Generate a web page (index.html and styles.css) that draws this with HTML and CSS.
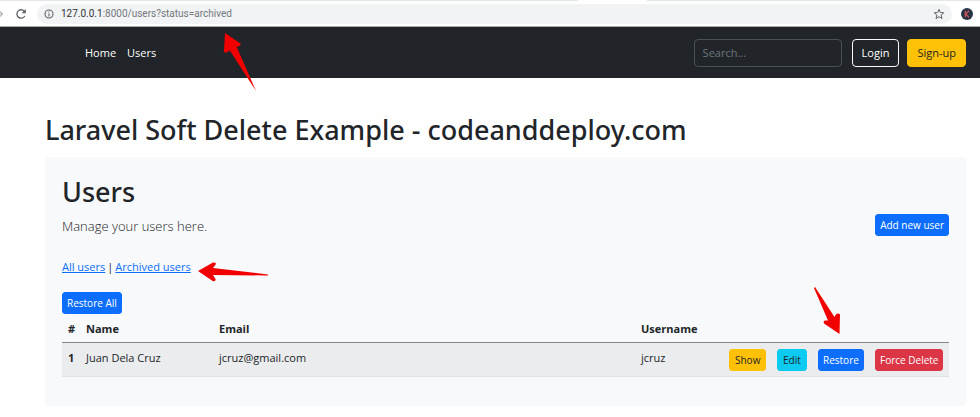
FILE: index.html
```
<!DOCTYPE html>
<html lang="en">
<head>
<meta charset="UTF-8">
<meta name="viewport" content="width=device-width, initial-scale=1">
<title>Laravel Soft Delete Example - codeanddeploy.com</title>
<link rel="stylesheet" href="styles.css">
</head>
<body>
	<div class="tabstrip"><span class="tab"></span></div>
	<div class="toolbar">
		<svg class="forward" viewBox="0 0 4 10"><path d="M-2 5h4M0 2.500l2.500 2.500-2.500 2.500" fill="none" stroke="#b5b8bb" stroke-width="1.2"/></svg>
		<button class="icon-btn" type="button" aria-label="Reload">
			<svg width="12" height="12" viewBox="0 0 12 12"><path d="M9.8 8A4.2 4.2 0 1 1 9.3 3.2L10 4" fill="none" stroke="#5f6368" stroke-width="1.3"/><path d="M10.8 1v4.2H6.6z" fill="#5f6368"/></svg>
		</button>
		<div class="address">
			<svg width="10" height="10" viewBox="0 0 10 10"><circle cx="5" cy="5" r="4" fill="none" stroke="#5f6368" stroke-width="1.1"/><path d="M5 4.4v3M5 2.5v1.1" stroke="#5f6368" stroke-width="1.1"/></svg>
			<span class="url"><span class="host">127.0.0.1</span>:8000/users?status=archived</span>
			<button class="icon-btn" type="button" aria-label="Bookmark">
				<svg width="12" height="12" viewBox="0 0 12 12"><path d="M6 1.3l1.3 3.2 3.5.3-2.7 2.3.9 3.4-3-1.8-3 1.8.9-3.4L1.200 4.800l3.5-.3z" fill="none" stroke="#5f6368" stroke-width="1"/></svg>
			</button>
		</div>
		<svg class="profile" width="12" height="12" viewBox="0 0 12 12"><circle cx="6" cy="6" r="6" fill="#263445"/><path d="M4.300 2.800v6.400M8 2.800L4.700 6 8 9.200" fill="none" stroke="#d9535b" stroke-width="1.2"/></svg>
	</div>

	<header class="navbar">
		<nav>
			<a href="#">Home</a>
			<a href="#">Users</a>
		</nav>
		<form class="search">
			<input type="search" placeholder="Search..." aria-label="Search">
		</form>
		<button class="nav-btn login" type="button">Login</button>
		<button class="nav-btn signup" type="button">Sign-up</button>
	</header>

	<main class="container">
		<h1>Laravel Soft Delete Example - codeanddeploy.com</h1>
		<div class="panel">
			<h1>Users</h1>
			<div class="lead">
				<span>Manage your users here.</span>
				<button class="btn primary" type="button">Add new user</button>
			</div>
			<div class="filters"><a href="#">All users</a><span>|</span><a href="#">Archived users</a></div>
			<button class="btn primary" type="button">Restore All</button>
			<table>
				<thead>
					<tr>
						<th class="col-id" scope="col">#</th>
						<th class="col-name" scope="col">Name</th>
						<th scope="col">Email</th>
						<th class="col-username" scope="col">Username</th>
						<th class="col-show"></th>
						<th class="col-edit"></th>
						<th class="col-restore"></th>
						<th class="col-delete"></th>
					</tr>
				</thead>
				<tbody>
					<tr>
						<th scope="row">1</th>
						<td>Juan Dela Cruz</td>
						<td>jcruz@gmail.com</td>
						<td>jcruz</td>
						<td><button class="btn warning" type="button">Show</button></td>
						<td><button class="btn info" type="button">Edit</button></td>
						<td><button class="btn primary" type="button">Restore</button></td>
						<td><button class="btn danger" type="button">Force Delete</button></td>
					</tr>
				</tbody>
			</table>
		</div>
	</main>

	<!-- red pointers over the page -->
	<svg class="arrow arrow-url" width="34" height="60" viewBox="0 0 34 60"><path d="M2 2L17.500 12.500Q18 15 15 15.500L13.500 15.500L33 60L6.500 19Q5 22 2 21.500Q0 21 1 19z"/></svg>
	<svg class="arrow arrow-filter" width="70" height="20" viewBox="0 0 70 20"><path d="M0 9L15 0.500Q18 0 18 2L15 6L70 12.500V13.500L15 13L17.500 17Q18 19.500 15 19.300z"/></svg>
	<svg class="arrow arrow-restore" width="28" height="48" viewBox="0 0 28 48"><path d="M1 0L20.500 30L22 27.500Q24 25.500 26 27.500L25.500 47L10 36.500Q9 34 11 33.500L14 33.500L0 1z"/></svg>
</body>
</html>
```
FILE: styles.css
```
* { box-sizing: border-box; }
body { margin: 0; position: relative; background: #fff; color: #212529; font-family: "Open Sans", "Noto Sans", sans-serif; font-size: 11px; line-height: 17px; }
button, input { font-family: inherit; font-size: inherit; line-height: inherit; }
button { cursor: pointer; }
a { color: #0d6efd; }
svg { display: block; flex: none; }

.tabstrip { display: flex; height: 1px; background: #e4e6ea; }
.tab { width: 7%; margin-left: 59%; background: #fff; }
.toolbar { display: flex; align-items: center; height: 26px; padding-right: 7px; border-bottom: 1px solid #a8a9ab; }
.forward { width: 4px; height: 10px; margin-right: 11px; }
.icon-btn { padding: 0; border: 0; background: none; }
.address { display: flex; flex: 1; align-items: center; gap: 7px; height: 20px; margin: 0 9px 0 10px; padding: 0 7px; border-radius: 10px; background: #f1f3f4; color: #74787c; font-family: Roboto, sans-serif; font-size: 10px; }
.url { flex: 1; }
.host { color: #303337; }

.navbar { display: flex; align-items: center; height: 51px; padding: 0 14px 0 85px; background: #212529; }
.navbar nav { display: flex; flex: 1; gap: 11px; }
.navbar a { color: #fff; text-decoration: none; }
.search input { display: block; width: 148px; height: 28px; padding: 0 8px; border: 1px solid #495057; border-radius: 4px; outline: 0; background: #212529; color: #fff; }
.search input::placeholder { color: #6c757d; }
.nav-btn { height: 28px; padding: 0 9px; border: 1px solid; border-radius: 4px; }
.login { margin: 0 8px 0 10px; border-color: #f8f9fa; background: #212529; color: #fff; }
.signup { border-color: #ffc107; background: #ffc107; color: #212529; }

.container { padding: 35px 14px 11px 45px; }
h1 { margin: 0; font-family: "Noto Sans", "Open Sans", sans-serif; font-size: 27px; font-weight: 500; line-height: 34px; }
.panel { margin-top: 10px; padding: 18px 17px 29px; border-radius: 4px; background: #f8f9fa; }
.lead { display: flex; justify-content: space-between; height: 36px; padding-top: 5px; font-size: 13px; font-weight: 300; line-height: 24px; }
.filters { display: flex; gap: 2px; margin: 13px 0 17px; }

.btn { display: block; height: 22px; padding: 0 4px; border: 1px solid; border-radius: 3px; font-size: 10px; font-weight: 400; line-height: 17px; white-space: nowrap; }
.primary { border-color: #0d6efd; background: #0d6efd; color: #fff; }
.warning { padding: 0 5px; border-color: #ffc107; background: #ffc107; color: #212529; }
.info { padding: 0 5px; border-color: #0dcaf0; background: #0dcaf0; color: #212529; }
.danger { border-color: #dc3545; background: #dc3545; color: #fff; }

table { width: 100%; border-collapse: collapse; table-layout: fixed; }
th, td { padding: 6px 0 5px 6px; text-align: left; vertical-align: top; }
th { font-weight: 700; }
thead tr { border-bottom: 1px solid #85888b; }
tbody tr { border-bottom: 1px solid #dee2e6; background: #ebeced; }
.col-id { width: 18px; }
.col-name { width: 133px; }
.col-username { width: 88px; }
.col-show { width: 48px; }
.col-edit { width: 41px; }
.col-restore { width: 57px; }
.col-delete { width: 80px; }

.arrow { position: absolute; fill: #f20000; pointer-events: none; }
.arrow-url { left: 223px; top: 31px; }
.arrow-filter { left: 198px; top: 262px; }
.arrow-restore { left: 814px; top: 287px; }
```
